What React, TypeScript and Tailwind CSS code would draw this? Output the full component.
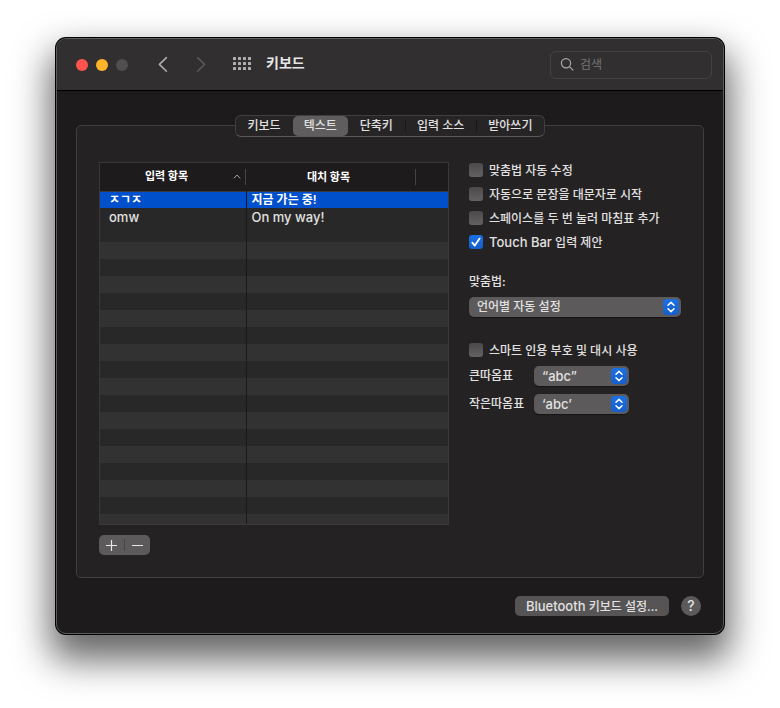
import { Fragment, useState, type ReactNode } from "react";

const rows = [
  { input: "ㅈㄱㅈ", replacement: "지금 가는 중!", style: "bg-[#004fcb] font-semibold text-white" },
  { input: "omw", replacement: "On my way!", style: "bg-[#282828] text-[13px]" },
];

const fillerRows = Array.from({ length: 18 }, (_, i) => i);

const tabs = [
  { name: "키보드", pad: "px-3" },
  { name: "텍스트", pad: "px-[11px]" },
  { name: "단축키", pad: "px-3" },
  { name: "입력 소스", pad: "pr-3 pl-[11px]" },
  { name: "받아쓰기", pad: "pr-3 pl-[11px]" },
];

function CheckRow({ id, checked = false, children }: { id: string; checked?: boolean; children: ReactNode }) {
  return (
    <div className="flex h-6 items-center gap-1.5">
      <span className="relative flex size-3.5 shrink-0">
        <input
          id={id}
          type="checkbox"
          defaultChecked={checked}
          className="peer size-3.5 appearance-none rounded-[3px] bg-linear-to-b from-[#4b494a] to-[#636162] checked:from-[#1b6fe3] checked:to-[#1560cc]"
        />
        <svg
          viewBox="0 0 14 14"
          className="pointer-events-none absolute inset-0 hidden size-3.5 peer-checked:block"
          fill="none"
          stroke="white"
          strokeWidth="1.8"
          strokeLinecap="round"
          strokeLinejoin="round"
        >
          <path d="M3.3 7.7 5.8 10.6 10.6 3.6" />
        </svg>
      </span>
      <label htmlFor={id} className="pt-0.5">
        {children}
      </label>
    </div>
  );
}

function PopUp({ id, options, className }: { id: string; options: string[]; className: string }) {
  return (
    <div className={`relative h-5 ${className}`}>
      <select
        id={id}
        className="block h-5 w-full appearance-none rounded-[5px] bg-[#5d5a5b] pr-6 pl-2 leading-5 shadow-[0_1px_1px_rgba(0,0,0,0.4)] outline-none"
      >
        {options.map((o) => (
          <option key={o}>{o}</option>
        ))}
      </select>
      <span className="pointer-events-none absolute top-0.5 right-0.5 flex size-4 items-center justify-center rounded-[4px] bg-linear-to-b from-[#1d70e2] to-[#155fc9]">
        <svg
          viewBox="0 0 16 16"
          className="size-4"
          fill="none"
          stroke="white"
          strokeWidth="1.5"
          strokeLinecap="round"
          strokeLinejoin="round"
        >
          <path d="M5 6.2 8 3.4 11 6.2M5 9.8 8 12.6 11 9.8" />
        </svg>
      </span>
    </div>
  );
}

export default function App() {
  const [tab, setTab] = useState("텍스트");

  return (
    <main className="min-h-screen bg-white px-14 pt-[38px] pb-[74px] font-['Inter','Noto_Sans_CJK_KR',sans-serif] text-xs font-medium text-[#e2e1e1]">
      <div className="overflow-hidden rounded-[10px] border border-[#5c5a5b] bg-[#1e1b1c] shadow-[0_0_0_1px_#000,0_20px_36px_6px_rgba(0,0,0,0.6)]">
        <header className="flex h-[52px] items-center border-b border-black bg-[#312f30] pr-[11px] pl-[19px]">
          <div className="flex gap-2">
            <button aria-label="닫기" className="size-3 rounded-full bg-[#ff544d]" />
            <button aria-label="최소화" className="size-3 rounded-full bg-[#ffb429]" />
            <button aria-label="확대" className="size-3 rounded-full bg-[#504e4f]" />
          </div>
          <button aria-label="뒤로" className="ml-6 flex size-6 items-center justify-center text-[#b0afaf]">
            <svg viewBox="0 0 24 24" className="size-6" fill="none" stroke="currentColor" strokeWidth="1.5" strokeLinecap="round" strokeLinejoin="round">
              <path d="M14.4 4.6 7.4 11.4 14.4 18.2" />
            </svg>
          </button>
          <button aria-label="앞으로" className="ml-3 flex size-6 items-center justify-center text-[#5a5859]">
            <svg viewBox="0 0 24 24" className="size-6" fill="none" stroke="currentColor" strokeWidth="1.5" strokeLinecap="round" strokeLinejoin="round">
              <path d="M9.6 4.6 16.6 11.4 9.6 18.2" />
            </svg>
          </button>
          <button aria-label="모두 보기" className="mr-[15px] mb-0.5 ml-[21px] flex text-[#b0afaf]">
            <svg viewBox="0 0 18 13" className="h-[13px] w-[18px]" fill="currentColor">
              {[0, 5, 10].map((y) =>
                [0, 5, 10, 15].map((x) => <rect key={`${x}-${y}`} x={x} y={y} width="3" height="3" rx="0.5" />),
              )}
            </svg>
          </button>
          <h1 className="pb-[3px] text-sm font-bold text-[#e8e7e7]">키보드</h1>
          <label className="ml-auto flex h-7 w-[162px] items-center gap-1.5 rounded-md border border-[#444243] px-[9px]">
            <svg viewBox="0 0 14 14" className="size-3.5 shrink-0" fill="none" stroke="#aaa9a9" strokeWidth="1.2" strokeLinecap="round">
              <circle cx="6" cy="5.2" r="4.6" />
              <path d="M9.4 8.6 13 12.2" />
            </svg>
            <input
              type="search"
              aria-label="검색"
              placeholder="검색"
              className="w-full min-w-0 bg-transparent font-normal outline-none placeholder:text-[#777576]"
            />
          </label>
        </header>

        <div className="px-[19px] pt-6 pb-[17px]">
          <nav className="relative mx-auto flex h-[22px] w-fit items-center rounded-md border border-[#403e3f] border-b-[#5a5859] bg-[#272425]">
            {tabs.map(({ name, pad }, i) => (
              <Fragment key={name}>
                {i > 2 && <span className="h-3 w-px bg-[#1b1819]" />}
                <button
                  onClick={() => setTab(name)}
                  aria-pressed={name === tab}
                  className={`h-5 rounded-[5px] leading-5 ${pad} ${name === tab ? "bg-[#5f5d5e]" : ""}`}
                >
                  {name}
                </button>
              </Fragment>
            ))}
          </nav>

          <section className="-mt-3 flex gap-5 rounded-[5px] border border-[#403e3f] bg-[#252223] pt-9 pr-[22px] pb-[22px] pl-[22px]">
            <div className="min-w-0 flex-1">
              <div className="h-[363px] overflow-hidden border border-[#393738]">
                <table className="w-full table-fixed border-collapse">
                  <colgroup>
                    <col className="w-[146px]" />
                    <col />
                    <col className="w-8" />
                  </colgroup>
                  <thead>
                    <tr className="h-7 border-b border-[#393738] bg-[#1e1b1c] text-[11px] text-white">
                      <th className="p-0 font-bold">
                        <div className="flex h-4 items-center border-r border-[#454344] pr-1">
                          <span className="flex-1">입력 항목</span>
                          <svg viewBox="0 0 8 5" className="h-[5px] w-2" fill="none" stroke="#a5a4a4" strokeWidth="1">
                            <path d="M0.8 4.4 4 1 7.2 4.4" />
                          </svg>
                        </div>
                      </th>
                      <th className="p-0 font-bold">
                        <div className="h-4 border-r border-[#454344] pr-1 leading-4">대치 항목</div>
                      </th>
                      <th className="p-0" aria-label="여백" />
                    </tr>
                  </thead>
                  <tbody>
                    {rows.map((r) => (
                      <tr key={r.input} className={`h-[17px] ${r.style}`}>
                        <td className="border-r border-[#1a1819] p-0 pl-[9px] leading-4">{r.input}</td>
                        <td colSpan={2} className="p-0 pl-[5px] leading-4">
                          {r.replacement}
                        </td>
                      </tr>
                    ))}
                    {fillerRows.map((i) => (
                      <tr key={i} className={i % 2 === 1 ? "h-[17px] bg-[#323232]" : "h-[17px] bg-[#282828]"}>
                        <td className="border-r border-[#1a1819] p-0" />
                        <td colSpan={2} className="p-0" />
                      </tr>
                    ))}
                  </tbody>
                </table>
              </div>
              <div className="mt-2.5 flex h-5 w-[51px] items-center rounded-[5px] bg-[#5d5a5b]">
                <button aria-label="추가" className="flex h-5 flex-1 items-center justify-center">
                  <svg viewBox="0 0 11 11" className="size-[11px]" stroke="#e8e7e7" strokeWidth="1.2">
                    <path d="M5.5 0V11M0 5.5H11" />
                  </svg>
                </button>
                <span className="h-3 w-px bg-[#474546]" />
                <button aria-label="제거" className="flex h-5 flex-1 items-center justify-center">
                  <svg viewBox="0 0 11 11" className="size-[11px]" stroke="#e8e7e7" strokeWidth="1.2">
                    <path d="M0 5.5H11" />
                  </svg>
                </button>
              </div>
            </div>

            <div className="-mt-1 w-[212px] shrink-0">
              <CheckRow id="autocorrect">맞춤법 자동 수정</CheckRow>
              <CheckRow id="capitalize">자동으로 문장을 대문자로 시작</CheckRow>
              <CheckRow id="period">스페이스를 두 번 눌러 마침표 추가</CheckRow>
              <CheckRow id="touchbar" checked>
                <span className="text-[13px]">Touch Bar</span> 입력 제안
              </CheckRow>
              <label htmlFor="spelling" className="mt-[18px] block leading-5">
                맞춤법:
              </label>
              <PopUp id="spelling" options={["언어별 자동 설정"]} className="mt-[5px] w-full" />
              <div className="mt-[21px]">
                <CheckRow id="smart">스마트 인용 부호 및 대시 사용</CheckRow>
              </div>
              <div className="mt-1 flex items-center">
                <label htmlFor="double" className="w-[65px]">
                  큰따옴표
                </label>
                <PopUp id="double" options={["“abc”"]} className="w-[95px] text-[13px]" />
              </div>
              <div className="mt-2 flex items-center">
                <label htmlFor="single" className="w-[65px]">
                  작은따옴표
                </label>
                <PopUp id="single" options={["‘abc’"]} className="w-[95px] text-[13px]" />
              </div>
            </div>
          </section>

          <footer className="mt-[18px] flex items-center justify-end gap-3 pr-[3px]">
            <button className="h-5 rounded-[5px] bg-[#565455] px-[11px] leading-5">
              <span className="text-[13px]">Bluetooth</span> 키보드 설정...
            </button>
            <button aria-label="도움말" className="size-5 rounded-full bg-[#5d5a5b] text-sm leading-5">
              ?
            </button>
          </footer>
        </div>
      </div>
    </main>
  );
}
